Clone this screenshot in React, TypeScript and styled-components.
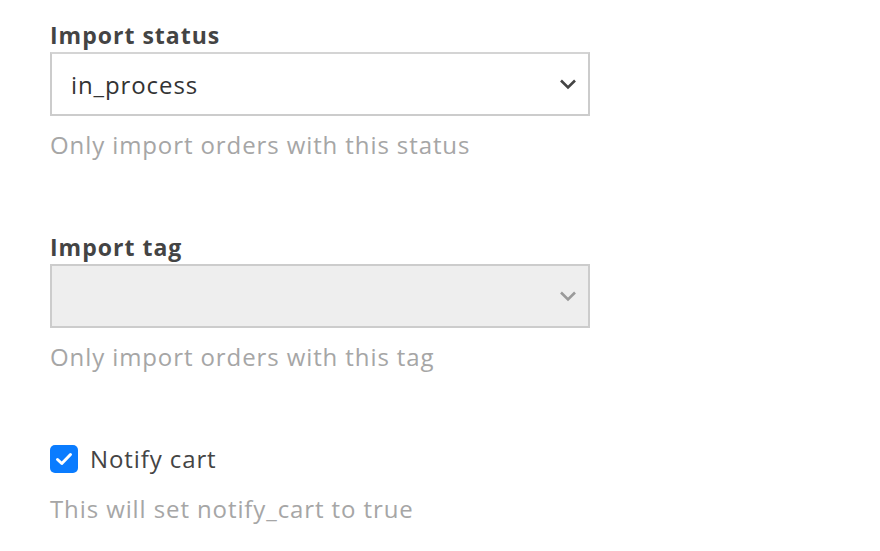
import React, { useState } from 'react';
import styled, { createGlobalStyle } from 'styled-components';

const GlobalStyle = createGlobalStyle`
  html, body {
    margin: 0;
    padding: 0;
    background: #ffffff;
  }
  body {
    font-family: "Open Sans", Lato, sans-serif;
  }
`;

const Form = styled.div`
  display: flex;
  flex-direction: column;
  width: 540px;
  padding: 18px 0 0 50px;
`;

const Field = styled.div`
  display: flex;
  flex-direction: column;
  margin-bottom: 68px;
`;

const Label = styled.label`
  font-size: 23px;
  font-weight: 700;
  letter-spacing: 1px;
  color: #444444;
  line-height: 34px;
`;

const SelectBox = styled.div<{ $disabled?: boolean }>`
  display: flex;
  align-items: center;
  justify-content: space-between;
  box-sizing: border-box;
  height: 64px;
  padding: 0 11px 0 19px;
  border: 2px solid #cccccc;
  border-top-color: ${p => (p.$disabled ? '#cccccc' : '#d4d4d4')};
  background: ${p => (p.$disabled ? '#eeeeee' : '#ffffff')};
  font-size: 24px;
  letter-spacing: 0.9px;
  color: #333333;
`;

const Chevron = styled.svg<{ $disabled?: boolean }>`
  width: 18px;
  height: 12px;
  stroke: ${p => (p.$disabled ? '#9a9a9a' : '#444444')};
  stroke-width: 2.6;
  fill: none;
`;

const Help = styled.div`
  margin-top: 12px;
  font-size: 24px;
  letter-spacing: 0.9px;
  color: #a6a6a6;
  line-height: 34px;
`;

const CheckRow = styled.label`
  display: flex;
  align-items: center;
  gap: 12px;
  font-size: 24px;
  letter-spacing: 0.9px;
  color: #444444;
  line-height: 34px;
  cursor: pointer;
`;

const Box = styled.span<{ $checked: boolean }>`
  display: flex;
  align-items: center;
  justify-content: center;
  width: 28px;
  height: 28px;
  border-radius: 5px;
  background: ${p => (p.$checked ? '#0a7cff' : '#ffffff')};
  border: ${p => (p.$checked ? 'none' : '2px solid #999')};
  box-sizing: border-box;
`;

const CheckHelp = styled(Help)`
  margin-top: 16px;
`;

const ChevronIcon = ({ disabled }: { disabled?: boolean }) => (
  <Chevron $disabled={disabled} viewBox="0 0 18 12">
    <path d="M2 2.5 L9 9.5 L16 2.5" />
  </Chevron>
);

export default function App() {
  const [notify, setNotify] = useState(true);

  return (
    <>
      <GlobalStyle />
      <Form>
        <Field>
          <Label>Import status</Label>
          <SelectBox>
            <span>in_process</span>
            <ChevronIcon />
          </SelectBox>
          <Help>Only import orders with this status</Help>
        </Field>
        <Field>
          <Label>Import tag</Label>
          <SelectBox $disabled>
            <span />
            <ChevronIcon disabled />
          </SelectBox>
          <Help>Only import orders with this tag</Help>
        </Field>
        <div>
          <CheckRow onClick={() => setNotify(!notify)}>
            <Box $checked={notify}>
              {notify && (
                <svg width="18" height="14" viewBox="0 0 18 14">
                  <path d="M2.5 7.5 L6.8 11.5 L15.5 2.5" stroke="#fff" strokeWidth="3" fill="none" strokeLinecap="round" strokeLinejoin="round" />
                </svg>
              )}
            </Box>
            Notify cart
          </CheckRow>
          <CheckHelp>This will set notify_cart to true</CheckHelp>
        </div>
      </Form>
    </>
  );
}
